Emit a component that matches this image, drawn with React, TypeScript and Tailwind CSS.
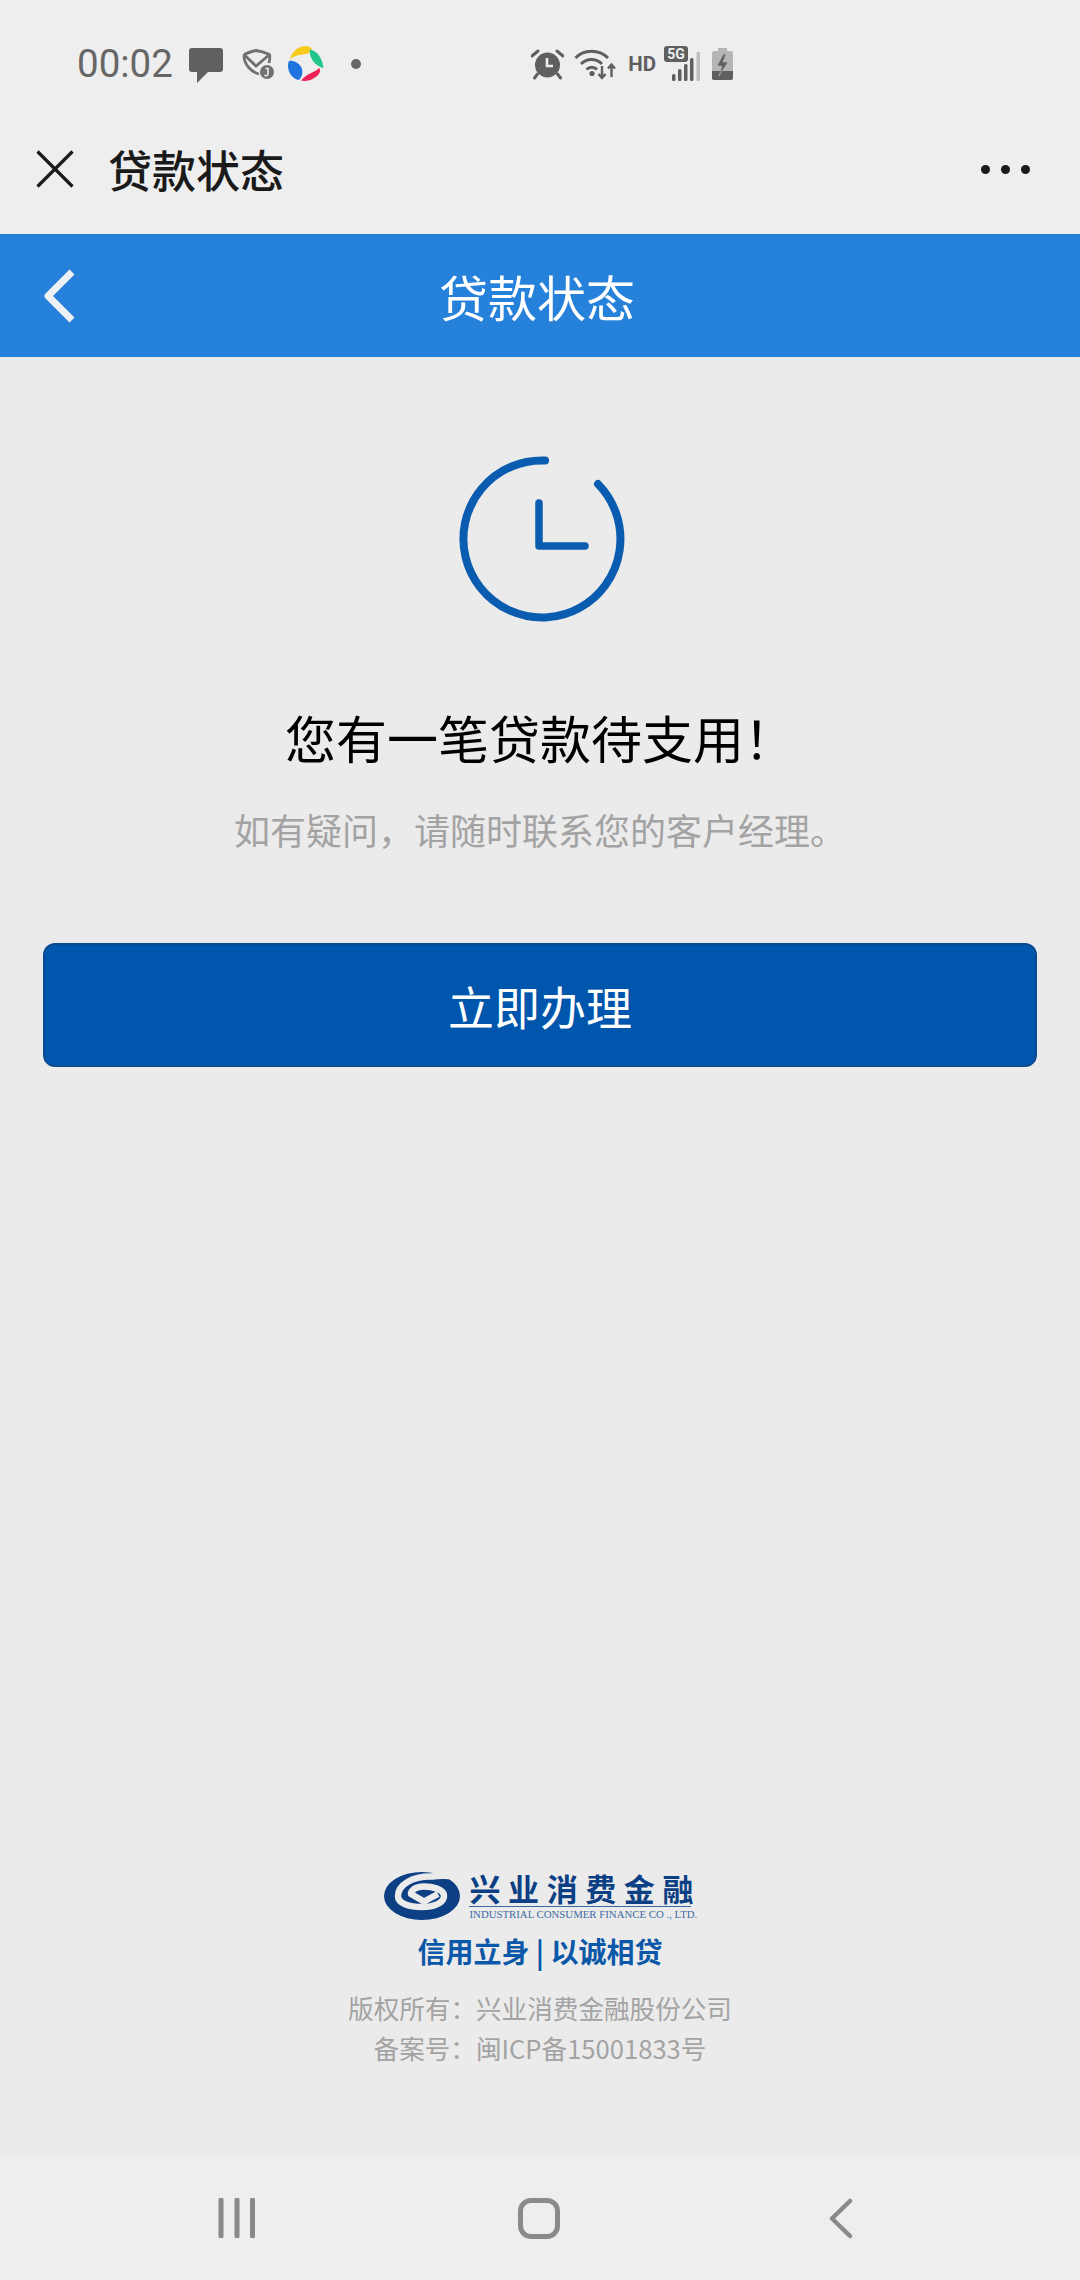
import React from "react";

function ChatIcon() {
  return (
    <svg width="34" height="35" viewBox="0 0 34 35" className="block mt-[3px]">
      <path d="M3 0h28a3 3 0 0 1 3 3v18a3 3 0 0 1-3 3H19L8 35V24H3a3 3 0 0 1-3-3V3a3 3 0 0 1 3-3z" fill="#606060" />
    </svg>
  );
}

function ShieldMailIcon() {
  return (
    <svg width="32" height="30" viewBox="0 0 32 30" className="block">
      <path d="M17 25 C9 23 2 15 2 7 C2 6 2.500 5.500 3 5 C8 3 11 2 14 1.500 C18 2 23 3.500 27.500 5.500 C28 8 28 10 27 14" fill="none" stroke="#707070" strokeWidth="2.800" strokeLinejoin="round" />
      <path d="M2.500 6 L14 17 L27 6" fill="none" stroke="#707070" strokeWidth="2.800" />
      <circle cx="25" cy="23" r="7" fill="#707070" />
      <path d="M23.500 19.500h2.500v5.500a2 2 0 0 1-3.500 1" fill="none" stroke="#eeeeee" strokeWidth="1.600" />
    </svg>
  );
}

function SwirlIcon() {
  return (
    <svg width="36" height="36" viewBox="0 0 36 36" className="block">
      <path d="M2 14 C3 7 9 0 18 0 C20 0 22 1 23.500 2 C24 5 21 7 18 8 C12 9 6 9 2 14z" fill="#f7cb1b" />
      <path d="M22 3.500 C29 5 34 11 35.500 22 C31 21 27 18 25 15 C23 12 21 8 22 3.500z" fill="#22c68a" />
      <path d="M31 22 C33 24 32 27 30 29 C26 33 20 36 13 34.500 C16 31 20 28 24 26.500 C26 25.500 29 24 31 22z" fill="#ee2257" />
      <path d="M1 15 C7 14 12 18 14 23 C15 27 14 31 11 34 C5 33 0 27 0 20 C0 18 0.500 16 1 15z" fill="#1f74e0" />
    </svg>
  );
}

function AlarmIcon() {
  return (
    <svg width="33" height="31" viewBox="0 0 33 31" className="block">
      <circle cx="16.500" cy="16" r="12.500" fill="#5f5f5f" />
      <path d="M16 9v8h6" fill="none" stroke="#eeeeee" strokeWidth="2.600" />
      <path d="M1 7 L7 2 M32 7 L26 2 M6.500 25 L3.500 29 M26.500 25 L29.500 29" stroke="#5f5f5f" strokeWidth="3" strokeLinecap="round" />
    </svg>
  );
}

function WifiIcon() {
  return (
    <svg width="43" height="33" viewBox="0 0 43 33" className="block">
      <path d="M1.500 10 C10 1 25 1 34 10 M7 16 C13 10 22 10 28 16 M12.500 21.500 C15.500 18.500 20 18.500 23 21.500" fill="none" stroke="#5f5f5f" strokeWidth="3" />
      <circle cx="18" cy="25.500" r="2.600" fill="#5f5f5f" />
      <path d="M28 18 v11 M24.500 26 l3.500 4 3.500-4" fill="none" stroke="#5f5f5f" strokeWidth="2.400" />
      <path d="M37.500 29 v-11 M34 20.500 l3.500-4 3.500 4" fill="none" stroke="#5f5f5f" strokeWidth="2.400" />
    </svg>
  );
}

function SignalIcon() {
  return (
    <svg width="36" height="36" viewBox="0 0 36 36" className="block">
      <rect x="0" y="0" width="24" height="16" rx="3" fill="#5f5f5f" />
      <text x="12" y="13" textAnchor="middle" fontSize="14" fontWeight="700" fill="#eeeeee" fontFamily="Roboto, sans-serif">5G</text>
      <rect x="8" y="28" width="3.500" height="7" rx="1.500" fill="#5f5f5f" />
      <rect x="14" y="23" width="3.500" height="12" rx="1.500" fill="#5f5f5f" />
      <rect x="20" y="18" width="3.500" height="17" rx="1.500" fill="#5f5f5f" />
      <rect x="26" y="12" width="3.500" height="23" rx="1.500" fill="#5f5f5f" />
      <rect x="32.500" y="6" width="3.500" height="29" rx="1" fill="#bdbdbd" />
    </svg>
  );
}

function BatteryIcon() {
  return (
    <svg width="21" height="32" viewBox="0 0 21 32" className="block">
      <path d="M6 0h9v3h4a2 2 0 0 1 2 2v25a2 2 0 0 1-2 2H2a2 2 0 0 1-2-2V5a2 2 0 0 1 2-2h4z" fill="#b5b5b5" />
      <path d="M0 23h21v7a2 2 0 0 1-2 2H2a2 2 0 0 1-2-2z" fill="#5f5f5f" />
      <path d="M11.500 6 L5 18 H10 L7 28 L16 14 H11 L14 6z" fill="#5f5f5f" stroke="#b5b5b5" strokeWidth="0.600" />
    </svg>
  );
}

function StatusBar() {
  return (
    <div className="h-[108px] pt-[20px] bg-[#eeeeee] flex items-center pl-[77px] pr-[347px]">
      <span className="text-[38.500px] leading-none text-[#666666] font-['Roboto',sans-serif]">00:02</span>
      <div className="ml-[16px] flex items-center">
        <ChatIcon />
        <div className="ml-[19px]"><ShieldMailIcon /></div>
        <div className="ml-[14px]"><SwirlIcon /></div>
        <div className="ml-[27px] w-[10px] h-[10px] rounded-full bg-[#666666]" />
      </div>
      <div className="ml-auto flex items-center">
        <AlarmIcon />
        <div className="ml-[10px]"><WifiIcon /></div>
        <span className="ml-[11px] text-[20.500px] leading-none font-bold text-[#5f5f5f] font-['Roboto',sans-serif]">HD</span>
        <div className="ml-[8px]"><SignalIcon /></div>
        <div className="ml-[12px]"><BatteryIcon /></div>
      </div>
    </div>
  );
}

function TitleBar() {
  return (
    <div className="h-[126px] bg-[#eeeeee] flex items-center pl-[36px] pr-[50px] pb-[4px]">
      <svg width="38" height="38" viewBox="0 0 38 38" className="block">
        <path d="M1.500 1.500 L36.500 36.500 M36.500 1.500 L1.500 36.500" stroke="#1a1a1a" strokeWidth="3.200" />
      </svg>
      <span className="ml-[34px] text-[44px] leading-none font-medium text-[#1a1a1a]">贷款状态</span>
      <div className="ml-auto flex items-center gap-[11px]">
        <div className="w-[9px] h-[9px] rounded-full bg-[#1a1a1a]" />
        <div className="w-[9px] h-[9px] rounded-full bg-[#1a1a1a]" />
        <div className="w-[9px] h-[9px] rounded-full bg-[#1a1a1a]" />
      </div>
    </div>
  );
}

function Header() {
  return (
    <div className="relative h-[123px] bg-[#2681da] flex items-center justify-center">
      <svg width="40" height="60" viewBox="0 0 40 60" className="absolute left-[40px] top-[33px]">
        <path d="M32 5 L8 29 L32 53" fill="none" stroke="#eef1f5" strokeWidth="7" strokeLinejoin="round" />
      </svg>
      <span className="text-[49px] leading-none text-white mr-[6px]">贷款状态</span>
    </div>
  );
}

function ClockIcon() {
  return (
    <svg width="170" height="170" viewBox="0 0 170 170" className="block ml-[4px]">
      <path d="M88 7.500 A78.500 78.500 0 1 0 141 31" fill="none" stroke="#0a5cb0" strokeWidth="8" strokeLinecap="round" />
      <path d="M82 50 V93 H128" fill="none" stroke="#0a5cb0" strokeWidth="7.500" strokeLinecap="round" strokeLinejoin="round" />
    </svg>
  );
}

function Logo() {
  return (
    <div className="flex items-center h-[48px]">
      <svg width="76" height="48" viewBox="0 0 76 48" className="block">
        <ellipse cx="38" cy="24" rx="38" ry="24" fill="#0c3f84" />
        <path d="M72 5 C62 3 55 3.500 48 4.500 C28 4 14 13 14 24 C14 32 26 35 38 35 C50 35 60 31 60 24 C60 17 48 14.500 40 14.500 C32 14.500 27 18 27 22 L40 29.500 L54 22" fill="none" stroke="#ebebeb" strokeWidth="6.500" strokeLinejoin="round" />
      </svg>
      <div className="ml-[9px] flex flex-col w-[226px]">
        <div className="text-[31px] leading-[31px] font-bold text-[#0c3f84] flex justify-between pr-[2px]">
          <span>兴</span><span>业</span><span>消</span><span>费</span><span>金</span><span>融</span>
        </div>
        <div className="h-[1px] bg-[#3a68a4] mt-[3px] w-[222px]" />
        <div className="text-[10.800px] leading-[12px] mt-[1px] text-[#3e6aa3] whitespace-nowrap font-['Liberation_Serif',serif]">INDUSTRIAL CONSUMER FINANCE CO ., LTD.</div>
      </div>
    </div>
  );
}

function NavBar() {
  return (
    <div className="h-[123px] bg-[#eeeeee] flex items-start pt-[41px] pl-[218px]">
      <svg width="38" height="40" viewBox="0 0 38 40" className="block">
        <path d="M3 2 V38 M19 2 V38 M34.500 2 V38" stroke="#8a8a8a" strokeWidth="5" strokeLinecap="round" />
      </svg>
      <div className="ml-[262px] w-[42px] h-[41px] rounded-[13px] border-[5px] border-[#8a8a8a]" />
      <svg width="25" height="41" viewBox="0 0 25 41" className="block ml-[268px]">
        <path d="M22 3 L4 20.500 L22 38" fill="none" stroke="#8a8a8a" strokeWidth="4.500" strokeLinecap="round" strokeLinejoin="round" />
      </svg>
    </div>
  );
}

export default function App() {
  return (
    <div className="min-h-[2280px] w-[1080px] flex flex-col bg-[#ebebeb] font-['Noto_Sans_CJK_SC','Noto_Sans',sans-serif]">
      <StatusBar />
      <TitleBar />
      <Header />
      <main className="flex-1 flex flex-col items-center">
        <div className="mt-[96px]"><ClockIcon /></div>
        <h1 className="mt-[82px] text-[51px] leading-[64px] text-black">您有一笔贷款待支用！</h1>
        <p className="mt-[35px] text-[36px] leading-[50px] text-[#a3a3a3]">如有疑问，请随时联系您的客户经理。</p>
        <button className="mt-[89px] w-[994px] h-[124px] rounded-[12px] bg-[#0056ac] border-2 border-[#0b4c90] text-white text-[46px] leading-none">立即办理</button>
        <div className="mt-auto pb-[90px] flex flex-col items-center">
          <Logo />
          <div className="mt-[11px] text-[28px] leading-[40px] font-bold text-[#0c58a8]">信用立身 | 以诚相贷</div>
          <div className="mt-[17px] text-[25.600px] leading-[40px] text-[#a3a3a3]">版权所有：兴业消费金融股份公司</div>
          <div className="text-[25.600px] leading-[39px] text-[#a3a3a3]">备案号：闽ICP备15001833号</div>
        </div>
      </main>
      <NavBar />
    </div>
  );
}
